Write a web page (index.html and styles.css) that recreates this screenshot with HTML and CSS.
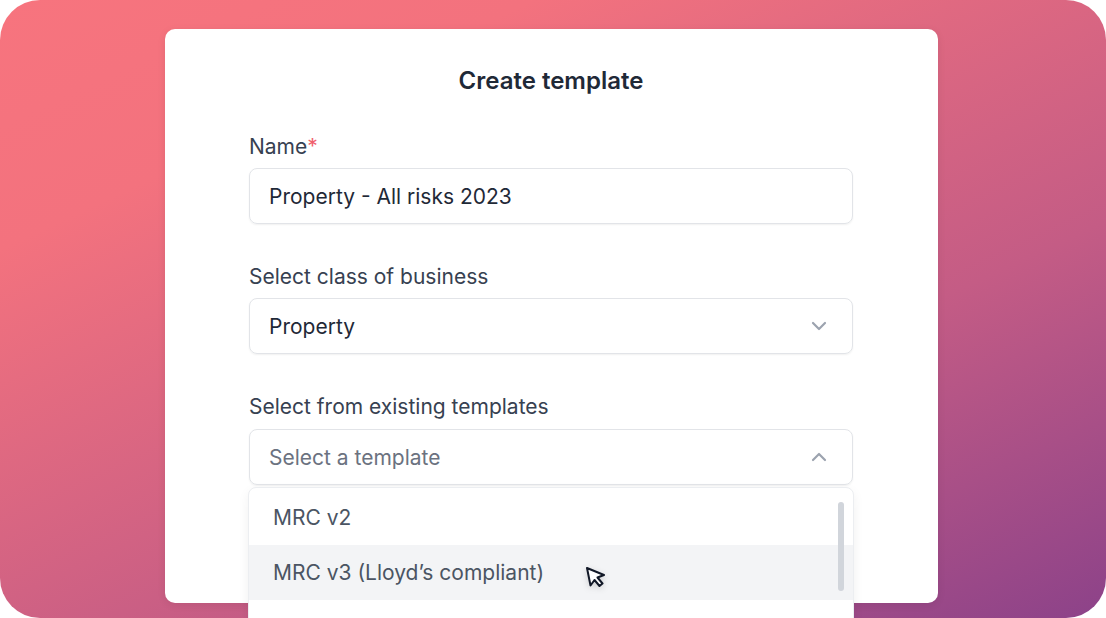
FILE: index.html
```html
<!DOCTYPE html>
<html>
<head>
<meta charset="utf-8">
<link rel="stylesheet" href="styles.css">
</head>
<body>
<div class="frame">
  <div class="card">
    <h1 class="title">Create template</h1>
    <div class="field">
      <label class="label">Name<span class="req">*</span></label>
      <div class="input">Property - All risks 2023</div>
    </div>
    <div class="field">
      <label class="label">Select class of business</label>
      <div class="input select">
        <span>Property</span>
        <svg class="chev" width="18" height="12" viewBox="0 0 18 12"><path d="M3 3 L9 9 L15 3" fill="none" stroke="#9ca3af" stroke-width="2.2" stroke-linecap="round" stroke-linejoin="round"/></svg>
      </div>
    </div>
    <div class="field last">
      <label class="label">Select from existing templates</label>
      <div class="input select placeholder">
        <span>Select a template</span>
        <svg class="chev" width="18" height="12" viewBox="0 0 18 12"><path d="M3 9 L9 3 L15 9" fill="none" stroke="#9ca3af" stroke-width="2.2" stroke-linecap="round" stroke-linejoin="round"/></svg>
      </div>
      <div class="menu">
        <div class="option">MRC v2</div>
        <div class="option active">MRC v3 (Lloyd’s compliant)
          <svg class="cursor" width="24" height="26" viewBox="0 0 24 26"><path d="M3 3 L20 10 L13.5 12.5 L18.5 18.5 L15.5 21 L10.5 15 L6.5 20.5 Z" fill="#fff" stroke="#111827" stroke-width="2" stroke-linejoin="round"/></svg>
        </div>
        <div class="option"></div>
        <div class="scrollbar"></div>
      </div>
    </div>
  </div>
</div>
</body>
</html>
```
FILE: styles.css
```css
html, body {
  margin: 0;
  padding: 0;
  background: #ffffff;
}
body {
  font-family: Inter, "Noto Sans", sans-serif;
  width: 1106px;
  height: 618px;
  overflow: hidden;
}
.frame {
  width: 1106px;
  height: 618px;
  border-radius: 40px;
  overflow: hidden;
  background: linear-gradient(155deg, #f7747e 0%, #f3727e 22%, #c45c85 65%, #8c4289 100%);
  padding: 29px 0 0 165px;
  box-sizing: border-box;
}
.card {
  width: 773px;
  height: 574px;
  background: #fff;
  border-radius: 10px;
  box-sizing: border-box;
  padding: 37px 85px 0 84px;
  box-shadow: 0 2px 8px rgba(0,0,0,0.08);
}
.title {
  margin: 0;
  text-align: center;
  font-size: 24px;
  line-height: 30px;
  font-weight: 600;
  color: #1f2937;
}
.field {
  margin-top: 39px;
  display: flex;
  flex-direction: column;
  position: relative;
}
.field + .field {
  margin-top: 41px;
}
.label {
  font-size: 21px;
  line-height: 24px;
  color: #374151;
  margin-bottom: 9px;
  font-weight: 400;
}
.last .label {
  margin-bottom: 10px;
}
.req {
  color: #f0606c;
}
.input {
  height: 56px;
  box-sizing: border-box;
  border: 1.5px solid #e2e4e8;
  border-radius: 8px;
  box-shadow: 0 1px 2px rgba(0,0,0,0.06);
  padding: 0 20px 0 19px;
  display: flex;
  align-items: center;
  font-size: 21px;
  color: #1f2937;
}
.select {
  justify-content: space-between;
}
.chev {
  margin-right: 4px;
}
.placeholder {
  color: #6b7280;
}
.menu {
  position: absolute;
  left: -1px;
  top: 92px;
  width: 606px;
  height: 160px;
  background: #fff;
  border: 1.5px solid #eceef1;
  border-radius: 8px;
  box-sizing: border-box;
  padding-top: 2px;
  box-shadow: 0 4px 12px rgba(0,0,0,0.06);
  overflow: hidden;
}
.option {
  height: 55px;
  display: flex;
  align-items: center;
  padding-left: 24px;
  font-size: 21px;
  color: #4b5563;
  position: relative;
}
.option.active {
  background: #f3f4f6;
}
.cursor {
  position: absolute;
  left: 335px;
  top: 20px;
  filter: drop-shadow(0 2px 3px rgba(0,0,0,0.15));
}
.scrollbar {
  position: absolute;
  right: 9px;
  top: 14px;
  width: 6px;
  height: 89px;
  border-radius: 3px;
  background: #d1d5db;
}
```
